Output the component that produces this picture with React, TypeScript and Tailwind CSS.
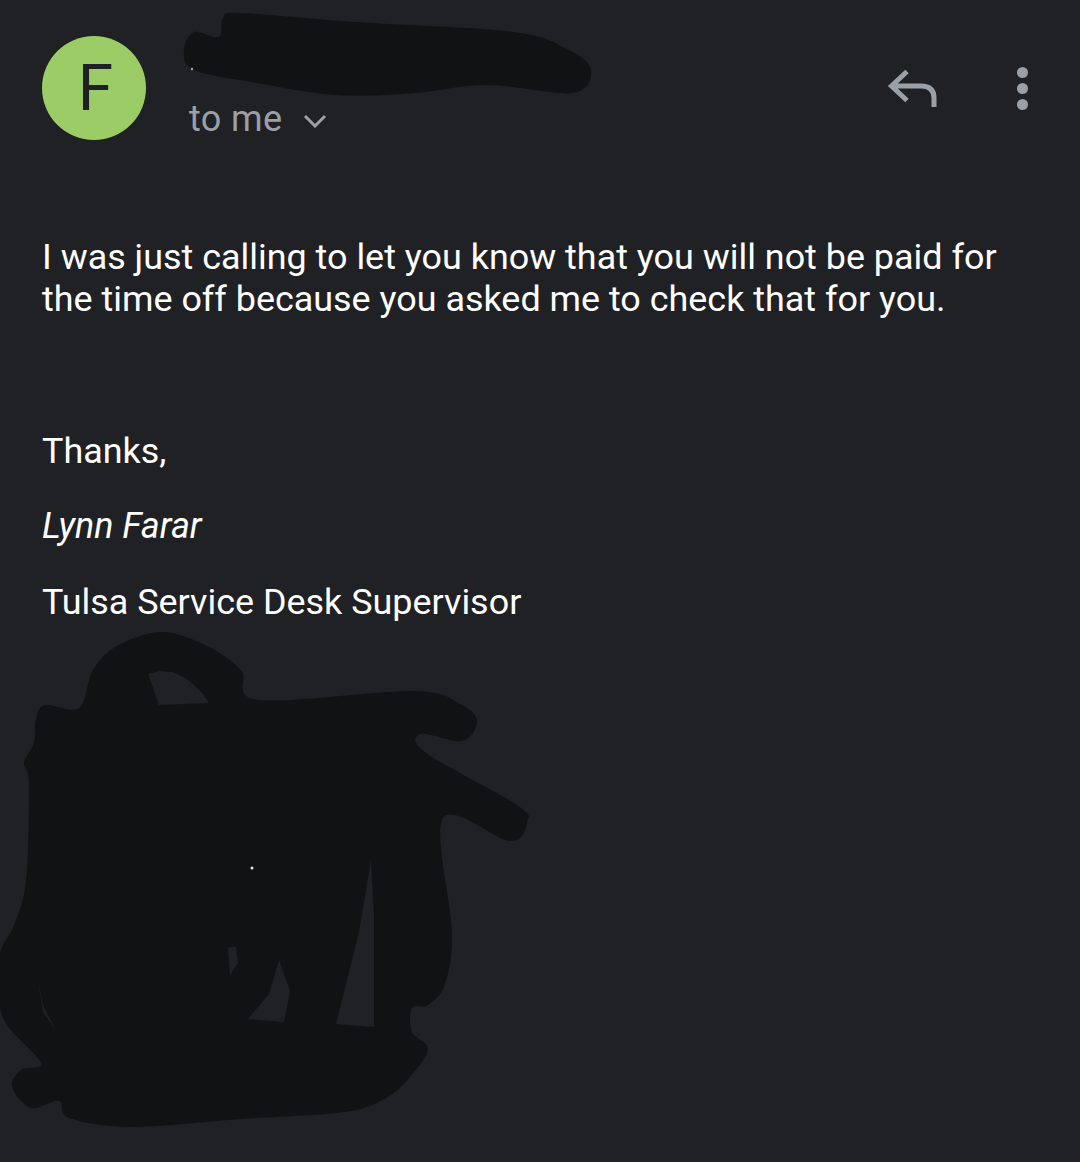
import React from "react";

type Pt = [number, number];

// closed catmull-rom curve through the outline points, for the marker strokes
function smooth(pts: Pt[]) {
  const n = pts.length;
  let d = `M${pts[0][0]} ${pts[0][1]}`;
  for (let i = 0; i < n; i++) {
    const p0 = pts[(i - 1 + n) % n];
    const p1 = pts[i];
    const p2 = pts[(i + 1) % n];
    const p3 = pts[(i + 2) % n];
    const c1x = p1[0] + (p2[0] - p0[0]) / 6;
    const c1y = p1[1] + (p2[1] - p0[1]) / 6;
    const c2x = p2[0] - (p3[0] - p1[0]) / 6;
    const c2y = p2[1] - (p3[1] - p1[1]) / 6;
    d += `C${c1x.toFixed(1)} ${c1y.toFixed(1)} ${c2x.toFixed(1)} ${c2y.toFixed(1)} ${p2[0]} ${p2[1]}`;
  }
  return d + "Z";
}

const hole = (pts: Pt[]) => "M" + pts.map((p) => p.join(" ")).join("L") + "Z";

const topScribble: Pt[] = [
  [184, 50], [194, 32], [219, 37], [223, 18], [241, 13], [356, 22], [514, 32], [569, 50],
  [591, 70], [573, 93], [486, 85], [415, 93], [336, 95], [257, 83], [194, 70],
];

const bigScribble: Pt[] = [
  [45, 703], [79, 706], [93, 668], [117, 644], [162, 630], [207, 644], [241, 668], [259, 698],
  [414, 689], [462, 703], [477, 720], [462, 739], [421, 732], [426, 751], [517, 803], [527, 820],
  [510, 839], [443, 816], [452, 930], [445, 982], [428, 1003], [412, 1006], [412, 1030], [428, 1047],
  [410, 1075], [386, 1096], [345, 1110], [241, 1117], [131, 1125], [69, 1116], [59, 1099], [31, 1106],
  [12, 1085], [21, 1068], [41, 1061], [7, 1023], [-2, 992], [0, 951], [14, 923], [26, 879],
  [29, 782], [24, 761], [34, 741], [36, 717],
];

const holes: Pt[][] = [
  [[148, 672], [160, 669], [172, 670], [184, 675], [193, 682], [202, 691], [209, 701], [159, 703]],
  [[371, 858], [374, 913], [374, 1025], [336, 1022], [359, 930]],
  [[279, 958], [290, 989], [284, 1020], [248, 1017], [269, 992]],
  [[228, 946], [236, 944], [238, 961], [230, 973]],
  [[38, 979], [43, 1003], [55, 1027], [43, 1010]],
];

export default function App() {
  return (
    <div className="min-h-[1162px] h-[1162px] overflow-hidden bg-[#202124] font-['Roboto',sans-serif] text-white">
      {/* Header */}
      <div className="relative flex items-start pl-[42px] pr-[52px] pt-[36px]">
        <div className="flex h-[104px] w-[104px] shrink-0 items-center justify-center rounded-full bg-[#9ccc65] pl-[3px] pt-[2px] text-[64px] leading-none text-[#202124]">
          F
        </div>
        <div className="ml-[43px] mt-[60px] flex items-center text-[36px] leading-[46px] tracking-[0.4px] text-[#9aa0a6]">
          to me
          <svg viewBox="0 0 24 14" className="ml-[20px] mt-[3px] h-[14px] w-[24px]" fill="none" stroke="currentColor" strokeWidth="3">
            <path d="M2 2l10 10L22 2" />
          </svg>
        </div>
        <div className="ml-auto mt-[31px] flex items-center gap-[80px]">
          <svg viewBox="887 68 50 42" className="h-[42px] w-[50px]" fill="none" stroke="#9aa0a6" strokeWidth="5">
            <path d="M907 71.500L891.500 86L907 100.500M892 86H921Q934 86 934 98V107" />
          </svg>
          <div className="flex flex-col gap-[5px]">
            <span className="h-[11px] w-[11px] rounded-full bg-[#9aa0a6]" />
            <span className="h-[11px] w-[11px] rounded-full bg-[#9aa0a6]" />
            <span className="h-[11px] w-[11px] rounded-full bg-[#9aa0a6]" />
          </div>
        </div>
        {/* redacted sender name */}
        <svg viewBox="180 8 416 92" className="absolute left-[180px] top-[8px] h-[92px] w-[416px]">
          <path d={smooth(topScribble)} fill="#111213" />
          <circle cx="192" cy="69" r="1.200" fill="#9aa0a6" />
        </svg>
      </div>

      {/* Body */}
      <div className="px-[42px] text-[35.92px] leading-[42px]">
        <p className="mt-[94px]">
          I was just calling to let you know that you will not be paid for the time off because you asked me to check that for you.
        </p>
        <p className="mt-[110px]">Thanks,</p>
        <p className="mt-[33px] italic">Lynn Farar</p>
        <p className="mt-[34px]">Tulsa Service Desk Supervisor</p>
      </div>

      {/* redacted signature image */}
      <svg viewBox="0 625 530 505" className="mt-[4px] block h-[505px] w-[530px]">
        <path d={smooth(bigScribble) + holes.map(hole).join("")} fill="#111213" fillRule="evenodd" />
        <circle cx="252" cy="866" r="1.500" fill="#e5e5e5" />
      </svg>
    </div>
  );
}
